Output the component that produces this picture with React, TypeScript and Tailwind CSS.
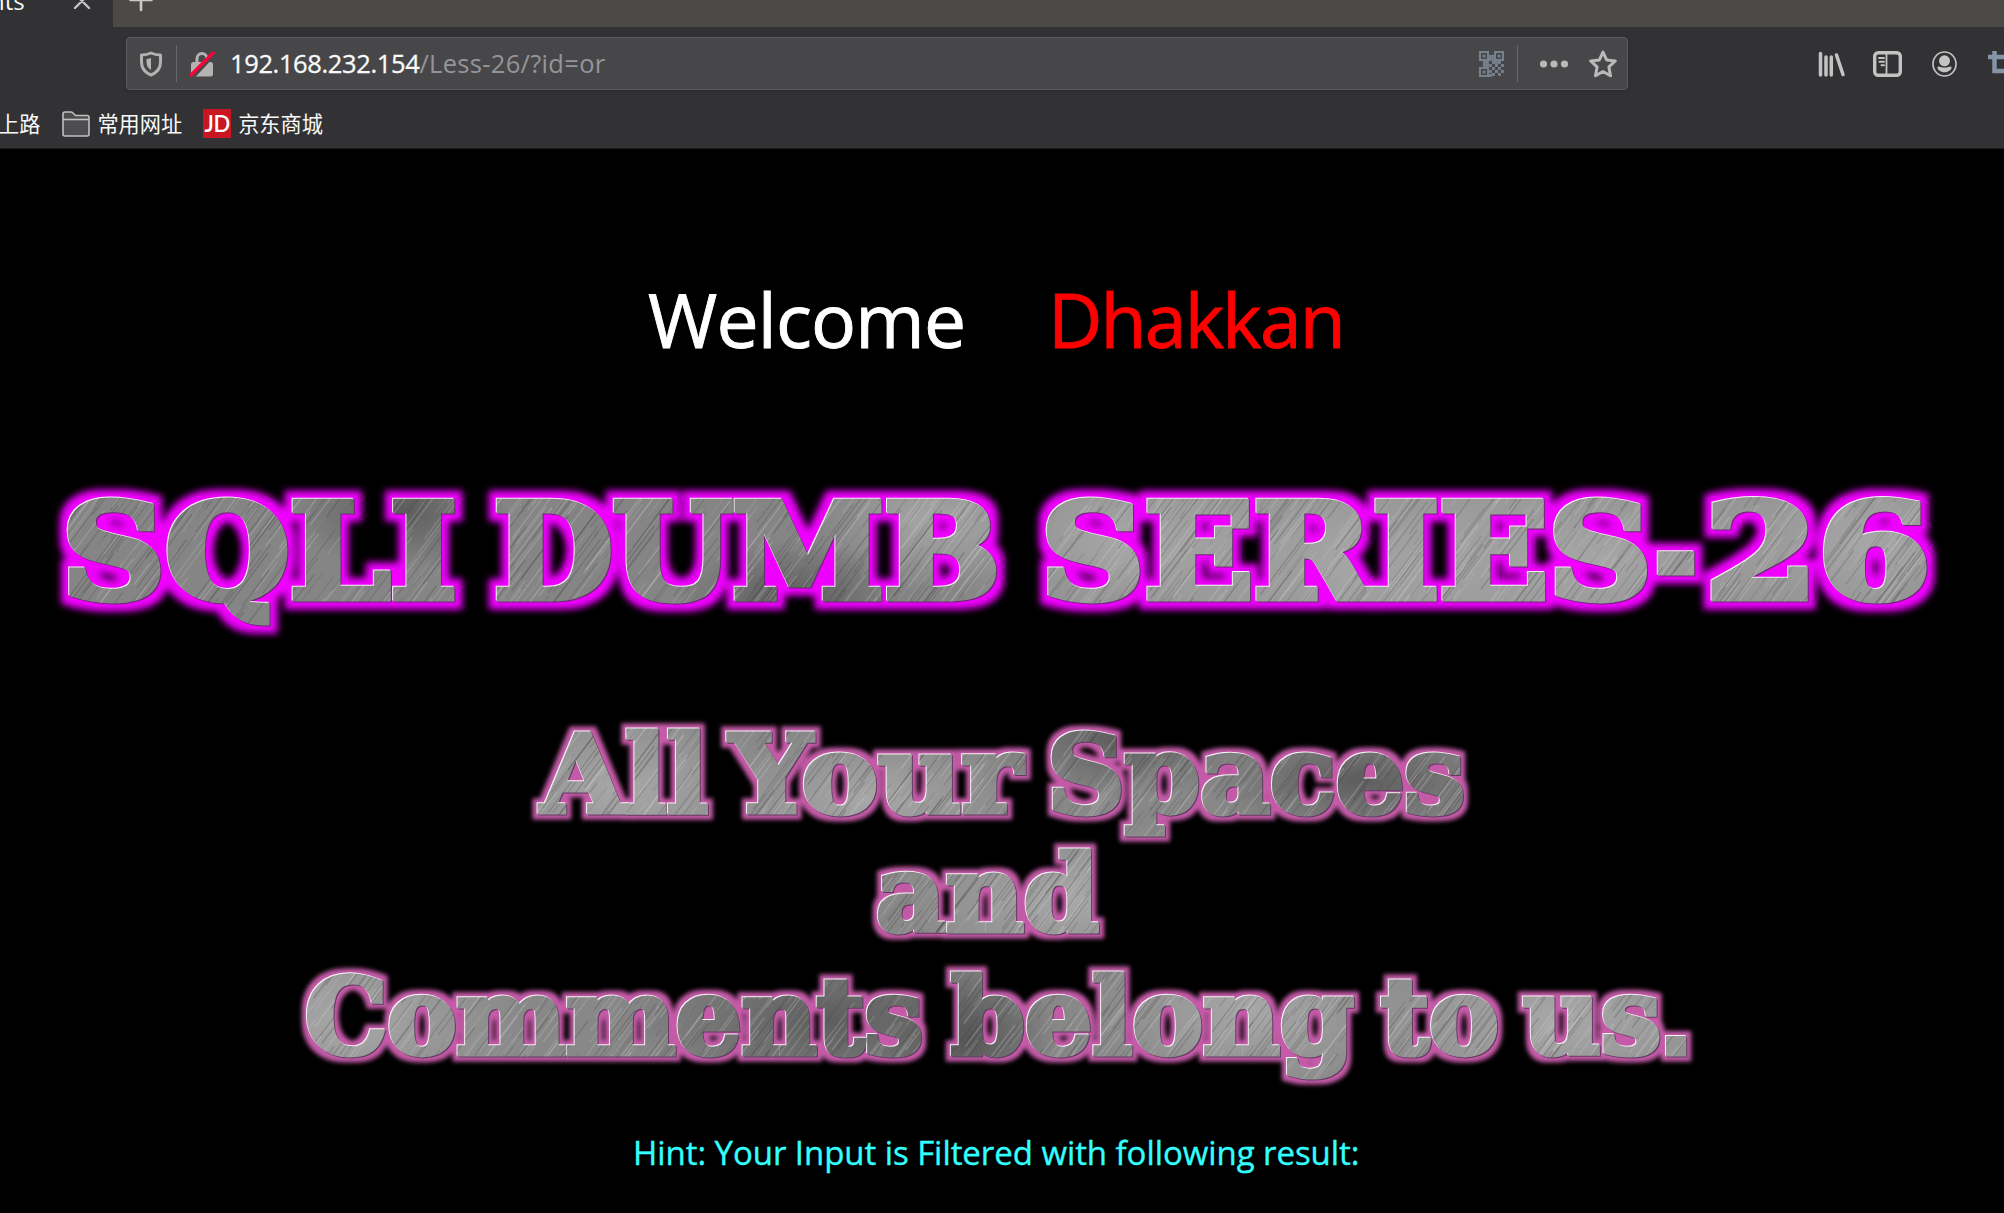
type Word = { text: string; x: number; y: number; width: number; size: number; stop?: string }
type Shade = { cx: number; cy: number; rx: number; ry: number; tone: 'dark' | 'light' }

const HEADLINE: Word[] = [
  { text: 'SQLI', x: 62, y: 598, width: 395, size: 131 },
  { text: 'DUMB', x: 494, y: 598, width: 506, size: 131 },
  { text: 'SERIES', x: 1041, y: 598, width: 611, size: 131 },
  { text: '-', x: 1655, y: 599, width: 42, size: 131 },
  { text: '26', x: 1705, y: 598, width: 226, size: 131 },
]

const TAGLINE: Word[] = [
  { text: 'All', x: 541, y: 812, width: 167, size: 107 },
  { text: 'Your', x: 730, y: 812, width: 292, size: 107 },
  { text: 'Spaces', x: 1047, y: 812, width: 418, size: 107 },
  { text: 'and', x: 876, y: 931, width: 223, size: 104 },
  { text: 'Comments', x: 305, y: 1054, width: 618, size: 104 },
  { text: 'belong', x: 951, y: 1054, width: 403, size: 104 },
  { text: 'to', x: 1381, y: 1054, width: 118, size: 104 },
  { text: 'us', x: 1523, y: 1054, width: 168, size: 104, stop: '.' },
]

// Deterministic scratches for the brushed steel fill.
const SCRATCHES = Array.from({ length: 3200 }, (_, i) => {
  const a = Math.abs(Math.sin(i * 12.9898) * 43758.5453) % 1
  const b = Math.abs(Math.sin(i * 78.233) * 12543.123) % 1
  const c = Math.abs(Math.sin(i * 39.425) * 9631.77) % 1
  return { x: a * 2050, y: b * 430 - 30, len: 20 + c * 60, light: i % 2 === 0, o: 0.08 + c * 0.18 }
})

const HEADLINE_SHADES: Shade[] = [
  { cx: 400, cy: 60, rx: 110, ry: 60, tone: 'dark' },
  { cx: 790, cy: 150, rx: 120, ry: 60, tone: 'dark' },
  { cx: 930, cy: 70, rx: 110, ry: 70, tone: 'light' },
  { cx: 1120, cy: 90, rx: 180, ry: 120, tone: 'light' },
  { cx: 1350, cy: 110, rx: 240, ry: 160, tone: 'light' },
  { cx: 1600, cy: 110, rx: 220, ry: 140, tone: 'light' },
  { cx: 1860, cy: 90, rx: 180, ry: 140, tone: 'light' },
]

const TAGLINE_SHADES: Shade[] = [
  { cx: 620, cy: 120, rx: 160, ry: 90, tone: 'light' },
  { cx: 870, cy: 130, rx: 150, ry: 70, tone: 'light' },
  { cx: 1120, cy: 70, rx: 130, ry: 60, tone: 'dark' },
  { cx: 1360, cy: 110, rx: 160, ry: 60, tone: 'dark' },
  { cx: 1080, cy: 230, rx: 190, ry: 80, tone: 'light' },
  { cx: 350, cy: 350, rx: 170, ry: 100, tone: 'light' },
  { cx: 830, cy: 350, rx: 220, ry: 90, tone: 'dark' },
  { cx: 970, cy: 370, rx: 90, ry: 80, tone: 'dark' },
  { cx: 1250, cy: 340, rx: 160, ry: 90, tone: 'light' },
  { cx: 1560, cy: 350, rx: 220, ry: 100, tone: 'light' },
]

function MetalBanner({ id, words, shades, top, height, glow, spread, blur, weight, base, className }: {
  id: string; words: Word[]; shades: Shade[]; top: number; height: number; glow: string
  spread: number; blur: number; weight: number; base: string; className: string
}) {
  return (
    <svg className={className} viewBox={`0 ${top} 2004 ${height}`}>
      <defs>
        <radialGradient id={`${id}-dark`}>
          <stop offset="0" stopColor="#3a3a3a" stopOpacity="0.55" />
          <stop offset="1" stopColor="#3a3a3a" stopOpacity="0" />
        </radialGradient>
        <radialGradient id={`${id}-light`}>
          <stop offset="0" stopColor="#c8c8c8" stopOpacity="0.5" />
          <stop offset="1" stopColor="#c8c8c8" stopOpacity="0" />
        </radialGradient>
        <pattern id={`${id}-fill`} patternUnits="userSpaceOnUse" x="0" y={top} width="2004" height={height}>
          <rect width="2004" height={height} fill={base} />
          {shades.map((s, i) => (
            <ellipse key={i} cx={s.cx} cy={s.cy} rx={s.rx} ry={s.ry} fill={`url(#${id}-${s.tone})`} />
          ))}
          {SCRATCHES.map((s, i) => (
            <line key={i} x1={s.x} y1={s.y} x2={s.x - s.len * 0.75} y2={s.y + s.len}
              stroke={s.light ? '#dcdcdc' : '#303030'} strokeOpacity={s.o} strokeWidth="1.3" />
          ))}
        </pattern>
        <filter id={`${id}-glow`} filterUnits="userSpaceOnUse" x="0" y={top} width="2004" height={height} colorInterpolationFilters="sRGB">
          <feMorphology in="SourceAlpha" operator="dilate" radius={spread} result="fat" />
          <feGaussianBlur in="fat" stdDeviation={blur} result="soft" />
          <feFlood floodColor={glow} />
          <feComposite in2="soft" operator="in" result="halo" />
          <feOffset in="SourceAlpha" dx="-1.3" dy="-1.5" result="up" />
          <feFlood floodColor="#f6f2f6" />
          <feComposite in2="up" operator="in" result="shine" />
          <feOffset in="SourceAlpha" dx="1.2" dy="1.4" result="down" />
          <feFlood floodColor="#4a3350" floodOpacity="0.8" />
          <feComposite in2="down" operator="in" result="shade" />
          <feMerge>
            <feMergeNode in="halo" />
            <feMergeNode in="shade" />
            <feMergeNode in="shine" />
            <feMergeNode in="SourceGraphic" />
          </feMerge>
        </filter>
      </defs>
      <g filter={`url(#${id}-glow)`} fill={`url(#${id}-fill)`} stroke={`url(#${id}-fill)`} strokeWidth={weight}
        fontFamily="'DejaVu Serif', serif" fontWeight="700">
        {words.map((w) => (
          <text key={w.text} x={w.x} y={w.y} fontSize={w.size} textLength={w.width} lengthAdjust="spacingAndGlyphs">
            {w.text}{w.stop && <tspan fontFamily="'Liberation Sans', sans-serif">{w.stop}</tspan>}
          </text>
        ))}
      </g>
    </svg>
  )
}

const QR_CELLS = [
  [10, 4], [13, 4], [4, 10], [4, 13], [19, 10], [10, 7], [13, 7],
  [7, 10], [13, 10], [10, 13], [16, 13], [22, 13], [7, 13], [13, 16], [19, 16],
  [10, 19], [16, 19], [22, 19], [13, 22], [19, 22], [16, 10], [10, 23],
]

function QrIcon() {
  return (
    <svg className="h-[26px] w-[25px]" viewBox="0 0 25 26" fill="#75818d">
      <path d="M1 1h8v8H1zM16 1h8v8h-8zM1 17h8v8H1z" fill="none" stroke="#75818d" strokeWidth="2" />
      <path d="M3.700 3.700h2.800v2.800H3.700zM18.700 3.700h2.800v2.800h-2.800zM3.700 19.700h2.800v2.800H3.700z" />
      {QR_CELLS.map(([x, y]) => <rect key={`${x}-${y}`} x={x} y={y} width="2.900" height="2.900" />)}
    </svg>
  )
}

function Separator() {
  return <div className="h-[37px] w-px bg-[#686872]" />
}

export default function App() {
  return (
    <div className="h-[1213px] w-[2004px] overflow-hidden bg-black font-['Open_Sans','Noto_Sans_CJK_SC',sans-serif]">
      <header className="flex h-[149px] flex-col bg-[#323234]">
        <div className="flex h-[27px]">
          <div className="flex w-[113px] justify-between overflow-hidden pr-[22px]">
            <span className="-ml-[10px] -mt-[15px] text-[24px] leading-[32px] text-[#f9f9fa]">nts</span>
            <svg className="h-[10px] w-[18px]" viewBox="0 0 18 10" stroke="#c4c4c5" strokeWidth="2.4" strokeLinecap="round">
              <path d="M2 8 16-6M16 8 2-6" />
            </svg>
          </div>
          <div className="flex-1 bg-[#4b4a46] pl-[16px]">
            <svg className="h-[12px] w-[24px]" viewBox="0 0 24 12" stroke="#cbcac8" strokeWidth="2.6" strokeLinecap="round">
              <path d="M1.500 0H22.500M12 -9V10" />
            </svg>
          </div>
        </div>
        <div className="flex h-[73px] items-start pt-[10px] pl-[126px]">
          <div className="flex h-[53px] w-[1503px] items-center rounded-[4px] border border-[#5c5c5f] bg-[#474749] pl-[12px] pr-[10px] shadow-[0_1px_4px_rgba(0,0,0,0.15)]">
            <svg className="h-[26px] w-[24px]" viewBox="0 0 24 26" fill="none" stroke="#b3b3b4">
              <path d="M12 2C9 3.400 6 4 2.500 4v7c0 6 3.500 10.500 9.500 13 6-2.500 9.500-7 9.500-13V4C18 4 15 3.400 12 2Z" strokeWidth="3" strokeLinejoin="round" />
              <path d="M12 7c-1.500.6-3 .9-4.500 1v3c0 3.500 1.500 6.200 4.500 8Z" fill="#b3b3b4" stroke="none" />
            </svg>
            <div className="ml-[13px]"><Separator /></div>
            <svg className="ml-[12px] h-[28px] w-[26px]" viewBox="0 0 26 28">
              <path d="M8 12V8.500a5 5 0 0 1 10 0V12" fill="none" stroke="#b3b3b4" strokeWidth="3" />
              <rect x="2" y="12" width="22" height="14.500" rx="2.500" fill="#b3b3b4" />
              <path d="M4 27 25.500 4" stroke="#474749" strokeWidth="3.500" />
              <path d="M2 25 24 3" stroke="#ff0039" strokeWidth="3.200" strokeLinecap="round" />
            </svg>
            <div className="-mt-[2px] ml-[15px] flex-1 whitespace-pre text-[25.5px] leading-[50px] text-[#959597]">
              <span className="tracking-[-0.38px] text-[#f9f9fa] [-webkit-text-stroke:0.3px_#f9f9fa]">192.168.232.154</span>
              <span className="tracking-[0.32px]">/Less-26/?id=or</span>
            </div>
            <QrIcon />
            <div className="ml-[13px]"><Separator /></div>
            <svg className="ml-[21px] h-[10px] w-[30px]" viewBox="0 0 30 10" fill="#b9b9ba">
              <circle cx="4.500" cy="5" r="3.600" /><circle cx="15" cy="5" r="3.600" /><circle cx="25.500" cy="5" r="3.600" />
            </svg>
            <svg className="ml-[20px] h-[28px] w-[28px]" viewBox="0 0 28 28" fill="none" stroke="#b9b9ba" strokeWidth="3" strokeLinejoin="round">
              <path d="m14 2 3.600 7.900 8.700 1-6.400 6 1.600 8.900L14 21.500 6.500 25.800l1.600-8.900-6.400-6 8.700-1Z" />
            </svg>
          </div>
          <div className="flex h-[53px] flex-1 items-center pl-[190px]">
            <svg className="h-[26px] w-[28px]" viewBox="0 0 28 26" stroke="#c3c3c4" strokeWidth="3.500" strokeLinecap="round">
              <path d="M2.500 2.500v21.500M8 6v18M13.300 6v18M18.500 4l6.500 19.500" />
            </svg>
            <svg className="ml-[27px] h-[26px] w-[29px]" viewBox="0 0 29 26" fill="none" stroke="#c3c3c4">
              <rect x="1.700" y="1.700" width="25.600" height="22.600" rx="3.500" strokeWidth="3.400" />
              <path d="M13.500 3v20" strokeWidth="1.800" />
              <path d="M6 7h5M6.500 10.700H11M8.500 14.300H11" strokeWidth="2" strokeLinecap="round" />
            </svg>
            <svg className="ml-[30px] h-[26px] w-[25px]" viewBox="0 0 25 26" fill="#c3c3c4">
              <ellipse cx="12.500" cy="13" rx="11.500" ry="12" fill="none" stroke="#c3c3c4" strokeWidth="1.700" />
              <circle cx="12.500" cy="9.800" r="5.500" />
              <path d="M5.800 15.700c1.500-1 2.500.8 6.700.8s5.200-1.800 6.700-.8c1.600 2-2.500 5.600-6.700 5.600s-8.300-3.600-6.700-5.600Z" />
            </svg>
            <svg className="-mt-[4px] ml-[31px] h-[25px] w-[16px] shrink-0" viewBox="0 0 16 25" fill="none" stroke="#8494a7" strokeWidth="4.500">
              <path d="M0 8h16M6.500 2v20H16" />
            </svg>
          </div>
        </div>
        <div className="-mt-[2px] flex h-[51px] items-center border-b border-[#1c1c1e] pt-px text-[21.2px] text-[#f9f9fa]">
          <span className="-ml-[2px] leading-[30px]">上路</span>
          <svg className="ml-[22px] h-[26px] w-[28px]" viewBox="0 0 28 26" fill="#4d4d4f" stroke="#c0c0c0" strokeWidth="1.600">
            <path d="M1 23V3q0-2 2-2h6q1 0 2 1l2.500 2.500H25q2 0 2 2V23q0 2-2 2H3q-2 0-2-2Z" />
            <path d="M1 8.500h26" />
          </svg>
          <span className="ml-[7px] leading-[30px]">常用网址</span>
          <span className="ml-[21px] mr-[7px] flex h-[29px] w-[28px] items-center justify-center bg-[#c91623] font-['Lato'] text-[22px] font-semibold leading-[29px] tracking-[-0.5px] text-white">JD</span>
          <span className="leading-[30px]">京东商城</span>
        </div>
      </header>
      <main className="flex flex-col">
        <h1 className="flex h-[301px] pl-[648px] pt-[118px] text-[75px] leading-[104px] text-white">
          <span className="w-[400px] tracking-[-0.8px] [-webkit-text-stroke:0.9px_#ffffff]">Welcome</span>
          <span className="tracking-[-1.8px] text-[#ff0000] [-webkit-text-stroke:0.9px_#ff0000]">Dhakkan</span>
        </h1>
        <MetalBanner id="headline" className="h-[220px] w-[2004px]" top={450} height={220} words={HEADLINE}
          shades={HEADLINE_SHADES} glow="#f000ff" spread={8} blur={3.500} weight={7} base="#858585" />
        <MetalBanner id="tagline" className="h-[430px] w-[2004px]" top={670} height={430} words={TAGLINE}
          shades={TAGLINE_SHADES} glow="#c55ba8" spread={5} blur={2} weight={5} base="#888888" />
        <p className="pl-[633px] pt-[28px] text-[33px] leading-[50px] tracking-[-0.06px] text-[#33ffff] [-webkit-text-stroke:0.35px_#33ffff]">
          Hint: Your Input is Filtered with following result:
        </p>
      </main>
    </div>
  )
}
